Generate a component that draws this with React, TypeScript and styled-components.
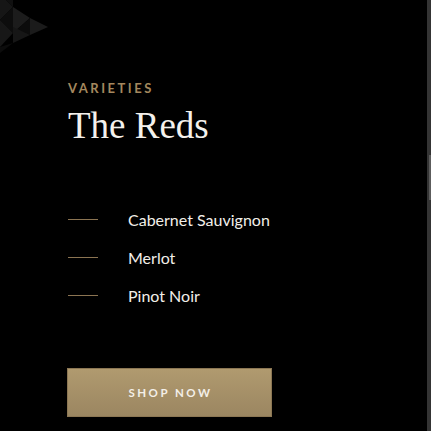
import React from "react";
import styled, { createGlobalStyle } from "styled-components";

const Global = createGlobalStyle`
  html, body { margin: 0; padding: 0; background: #000; }
  body { font-family: Lato, "Open Sans", sans-serif; overflow: hidden; }
`;

const Page = styled.main`
  position: relative;
  min-height: 431px;
  background: #000;
  padding: 80px 0 0 68px;
  box-sizing: border-box;
  display: flex;
  flex-direction: column;
`;

const Pattern = styled.svg`
  position: absolute;
  top: 0;
  left: 0;
`;

const Eyebrow = styled.div`
  font-family: Lato, sans-serif;
  font-weight: 700;
  font-size: 13px;
  line-height: 16px;
  letter-spacing: 2.5px;
  color: #a4885e;
  text-transform: uppercase;
`;

const Title = styled.h1`
  margin: 10px 0 0;
  font-family: "Liberation Serif", "Times New Roman", serif;
  font-weight: 400;
  font-size: 37px;
  line-height: 40px;
  color: #f4f1ec;
`;

const List = styled.ul`
  list-style: none;
  margin: 62px 0 0;
  padding: 0;
  display: flex;
  flex-direction: column;
  gap: 16px;
`;

const Item = styled.li`
  display: flex;
  align-items: center;
  gap: 30px;
  height: 22px;
  font-family: Lato, sans-serif;
  font-size: 16px;
  font-weight: 400;
  color: #f2efe9;
`;

const Dash = styled.span`
  width: 30px;
  height: 1px;
  background: #8b7452;
  flex-shrink: 0;
`;

const Button = styled.button`
  margin-top: 62px;
  width: 205px;
  height: 49px;
  border: 1px solid #8c7754;
  background: linear-gradient(#b09a6f, #9b8661);
  color: #f3efe8;
  font-family: Lato, sans-serif;
  font-weight: 700;
  font-size: 11.5px;
  letter-spacing: 2.5px;
  text-transform: uppercase;
  padding: 0 0 0 2px;
  cursor: pointer;
`;

const ButtonRow = styled.div`
  display: flex;
  margin-left: -1px;
`;

const Track = styled.div`
  position: fixed;
  top: 0;
  right: 0;
  width: 4px;
  height: 431px;
  background: #343434;
`;

const Thumb = styled.div`
  position: absolute;
  top: 155px;
  right: 0;
  width: 2px;
  height: 45px;
  background: #5c5c5c;
`;

const items = ["Cabernet Sauvignon", "Merlot", "Pinot Noir"];

export default function App() {
  return (
    <>
      <Global />
      <Page>
        <Pattern width="60" height="60" viewBox="0 0 60 60">
          <polygon points="0,-6 13,7 0,20" fill="#161616" />
          <polygon points="13,-12 13,7 0,-6" fill="#101010" />
          <polygon points="0,20 13,7 13,33" fill="#0d0d0d" />
          <polygon points="13,7 13,33 30,18" fill="#1c1c1c" />
          <polygon points="0,20 13,33 0,47" fill="#171717" />
          <polygon points="13,33 30,18 30,35" fill="#0c0c0c" />
          <polygon points="30,18 30,35 48,27" fill="#1b1b1b" />
          <polygon points="13,27 13,43 30,35" fill="#161616" />
          <polygon points="0,47 13,43 0,53" fill="#0c0c0c" />
        </Pattern>
        <Eyebrow>Varieties</Eyebrow>
        <Title>The Reds</Title>
        <List>
          {items.map((t) => (
            <Item key={t}>
              <Dash />
              {t}
            </Item>
          ))}
        </List>
        <ButtonRow>
          <Button>Shop Now</Button>
        </ButtonRow>
        <Track>
          <Thumb />
        </Track>
      </Page>
    </>
  );
}
